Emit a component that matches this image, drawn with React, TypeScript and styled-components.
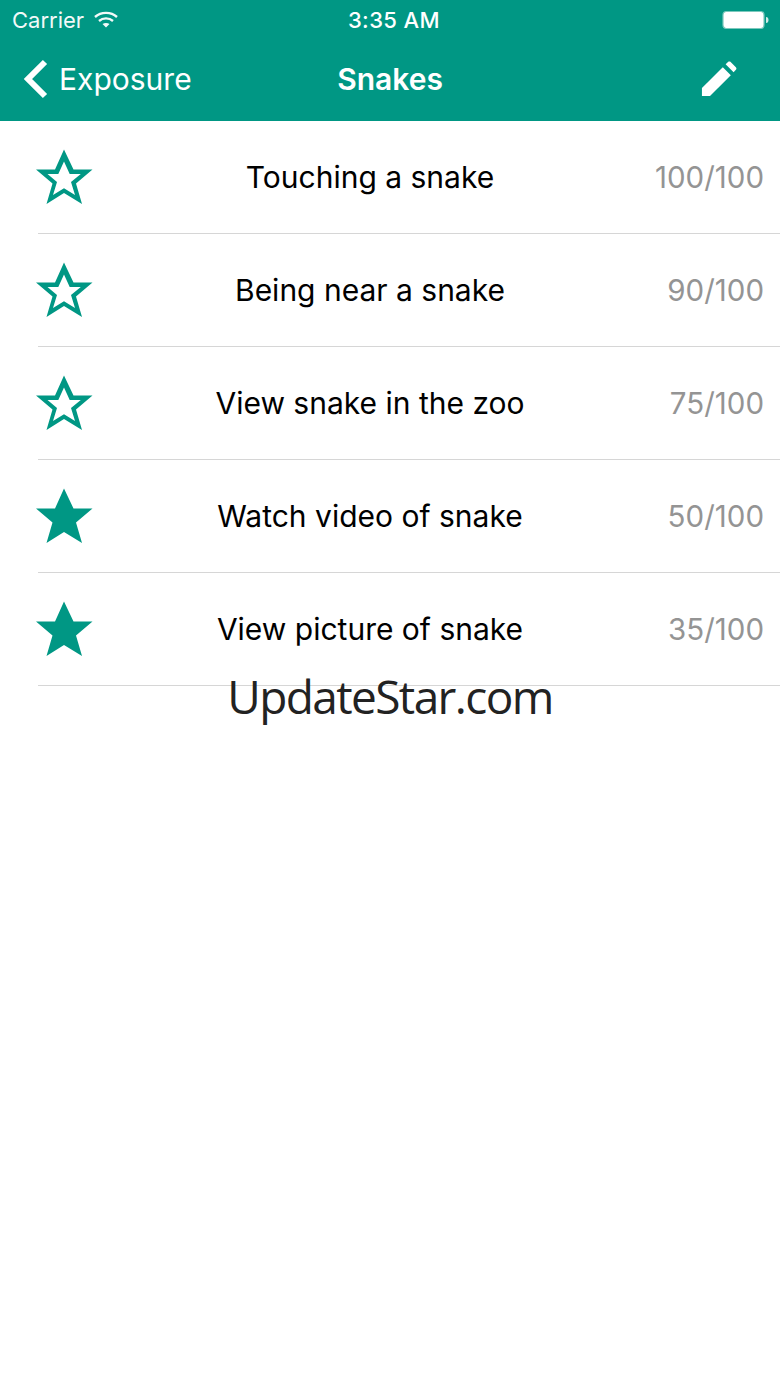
import styled, {createGlobalStyle} from "styled-components"

const GlobalStyle = createGlobalStyle`
  html, body {
    margin: 0;
    padding: 0;
    background: #fff;
    font-family: Inter, "Liberation Sans", Arial, sans-serif;
  }
`
const Page = styled.div`
  position: relative;
  width: 780px;
  height: 1387px;
  overflow: hidden;
  background: #fff;
`
const Header = styled.header`
  height: 121px;
  background: #009784;
  color: #fff;
`
const StatusBar = styled.div`
  display: grid;
  grid-template-columns: 1fr auto 1fr;
  align-items: center;
  height: 40px;
  padding: 0 11px 0 12px;
  font-size: 22px;
`
const StatusLeft = styled.div`
  display: flex;
  align-items: center;
  gap: 10px;
  opacity: .95;
`
const StatusTime = styled.div`
  margin-left: 7px;
  font-weight: 500;
  letter-spacing: .4px;
`
const Battery = styled.svg`
  justify-self: end;
`
const NavBar = styled.nav`
  display: grid;
  grid-template-columns: 1fr auto 1fr;
  align-items: center;
  height: 78px;
  padding: 0 22px 3px;
`
const BackLink = styled.div`
  display: flex;
  align-items: center;
  gap: 10px;
  font-size: 30px;
`
const Title = styled.div`
  font-size: 30px;
  font-weight: 600;
`
const EditIcon = styled.svg`
  justify-self: end;
  margin-right: 21px;
`
const List = styled.ul`
  list-style: none;
  margin: 0;
  padding: 0;
`
const Row = styled.li`
  position: relative;
  display: grid;
  align-items: center;
  height: 112px;
  margin-left: 38px;
  padding-right: 16px;
  border-bottom: 1px solid #d6d6d6;
`
const StarIcon = styled.svg`
  position: absolute;
  left: -2px;
  top: 28px;
`
const RowLabel = styled.div`
  grid-area: 1 / 1;
  justify-self: center;
  padding-right: 62px;
  font-size: 30px;
  color: #000;
`
const Score = styled.div`
  grid-area: 1 / 1;
  justify-self: end;
  font-size: 29.5px;
  color: #949494;
`
const Watermark = styled.div`
  position: absolute;
  top: 665px;
  left: 0;
  width: 780px;
  text-align: center;
  font-family: "Open Sans", sans-serif;
  font-size: 46px;
  font-weight: 400;
  letter-spacing: -1.6px;
  line-height: 62px;
  color: #222;
`

const STAR_OUTER = "M28 .5 L37.5 20.5 L56.5 20.5 L40 34.5 L46 55 L28 44 L10.5 55 L16.5 34.5 L0 20.5 L19 20.5 Z"
const STAR_INNER = "M28 12.5 L22.3 25 L11.5 25 L21 33 L17 46 L28 39.2 L39 46 L35 33 L44.8 25 L33.7 25 Z"

function Star({filled}: {filled: boolean}) {
  return <StarIcon width="57" height="56" viewBox="0 0 57 56">
    <path d={filled ? STAR_OUTER : `${STAR_OUTER} ${STAR_INNER}`} fill="#009784" fillRule="evenodd"/>
  </StarIcon>
}

const rows = [
  {label: "Touching a snake", score: "100/100", filled: false},
  {label: "Being near a snake", score: "90/100", filled: false},
  {label: "View snake in the zoo", score: "75/100", filled: false},
  {label: "Watch video of snake", score: "50/100", filled: true},
  {label: "View picture of snake", score: "35/100", filled: true},
]

export default function App() {
  return <Page>
    <GlobalStyle/>
    <Header>
      <StatusBar>
        <StatusLeft>
          <span>Carrier</span>
          <svg width="24" height="18" viewBox="0 0 24 18" fill="none" stroke="#fff" strokeWidth="2.4">
            <path d="M1 6 C7 0.5 17 0.5 23 6"/>
            <path d="M5 10 C9 6.5 15 6.5 19 10"/>
            <path d="M8.5 13 L12 16.5 L15.5 13 C13.5 11.5 10.5 11.5 8.5 13 Z" fill="#fff" stroke="none"/>
          </svg>
        </StatusLeft>
        <StatusTime>3:35 AM</StatusTime>
        <Battery width="47" height="20" viewBox="0 0 47 20">
          <rect x="1" y="1.5" width="41" height="17" rx="3.5" fill="#fff" stroke="#7cc9bd" strokeWidth="1.2"/>
          <path d="M44 7 C46 7 46.5 8.5 46.5 10 C46.5 11.5 46 13 44 13 Z" fill="#cdeae5"/>
        </Battery>
      </StatusBar>
      <NavBar>
        <BackLink>
          <svg width="27" height="40" viewBox="0 0 27 40" fill="none" stroke="#fff" strokeWidth="6">
            <path d="M23 3 L6 20 L23 37"/>
          </svg>
          <span>Exposure</span>
        </BackLink>
        <Title>Snakes</Title>
        <EditIcon width="36" height="36" viewBox="0 0 38 38" fill="#fff">
          <path d="M1 37 L1 28.5 L23 6.5 L31.5 15 L9.5 37 Z"/>
          <path d="M26 3.5 L28.5 1 C29.3 .3 30.5 .3 31.3 1 L36.8 6.5 C37.6 7.3 37.6 8.5 36.8 9.3 L34.4 11.9 Z"/>
        </EditIcon>
      </NavBar>
    </Header>
    <List>
      {rows.map((row) =>
        <Row key={row.label}>
          <Star filled={row.filled}/>
          <RowLabel>{row.label}</RowLabel>
          <Score>{row.score}</Score>
        </Row>
      )}
    </List>
    <Watermark>UpdateStar.com</Watermark>
  </Page>
}
